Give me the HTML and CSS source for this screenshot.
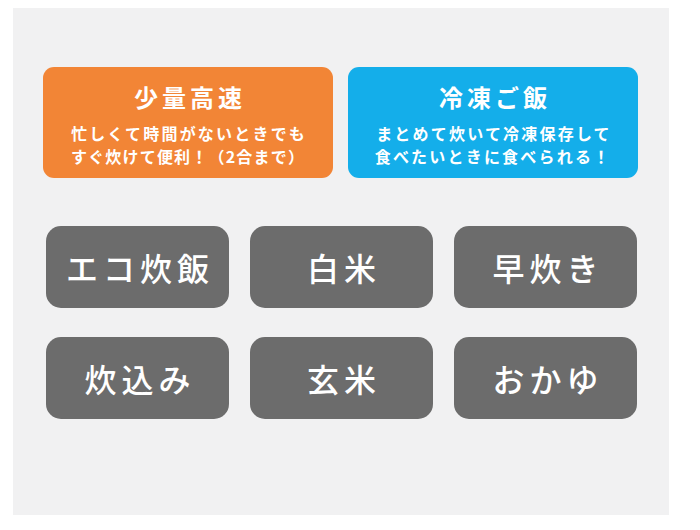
FILE: index.html
```html
<!DOCTYPE html>
<html lang="ja">
<head>
<meta charset="utf-8">
<link rel="stylesheet" href="styles.css">
</head>
<body>
<div class="panel">
  <div class="cards">
    <div class="card card-orange">
      <div class="card-title">少量高速</div>
      <div class="card-desc">忙しくて時間がないときでも<br><span class="tight">すぐ炊けて便利！（2合まで）</span></div>
    </div>
    <div class="card card-blue">
      <div class="card-title">冷凍ご飯</div>
      <div class="card-desc">まとめて炊いて冷凍保存して<br>食べたいときに食べられる！</div>
    </div>
  </div>
  <div class="modes">
    <div class="mode">エコ炊飯</div>
    <div class="mode">白米</div>
    <div class="mode">早炊き</div>
    <div class="mode">炊込み</div>
    <div class="mode">玄米</div>
    <div class="mode">おかゆ</div>
  </div>
</div>
</body>
</html>
```
FILE: styles.css
```css
html, body {
  margin: 0;
  padding: 0;
  background: #ffffff;
}
body {
  width: 700px;
  height: 530px;
  font-family: "Noto Sans CJK JP", "Noto Sans", sans-serif;
}
.panel {
  margin: 8px 0 0 13px;
  width: 656px;
  height: 507px;
  background: #f1f1f2;
  box-sizing: border-box;
  padding: 59px 0 0 30px;
}
.cards {
  display: flex;
  gap: 15px;
}
.card {
  width: 290px;
  height: 111px;
  border-radius: 11px;
  color: #ffffff;
  box-sizing: border-box;
  padding-top: 15px;
  text-align: center;
}
.card-orange { background: #f28536; }
.card-blue { background: #14aeea; }
.card-title {
  font-size: 24px;
  font-weight: 700;
  letter-spacing: 4px;
  line-height: 30px;
  text-indent: 4px;
}
.card-desc {
  margin-top: 10px;
  font-size: 16px;
  font-weight: 700;
  letter-spacing: 2.2px;
  line-height: 23px;
  text-indent: 2px;
}
.tight {
  letter-spacing: 1.2px;
}
.modes {
  margin: 48px 0 0 3px;
  display: grid;
  grid-template-columns: repeat(3, 183px);
  grid-auto-rows: 82px;
  column-gap: 21px;
  row-gap: 29px;
}
.mode {
  background: #6c6c6c;
  border-radius: 15px;
  color: #ffffff;
  display: flex;
  align-items: center;
  justify-content: center;
  font-size: 32px;
  font-weight: 500;
  letter-spacing: 5px;
  text-indent: 5px;
}
```
